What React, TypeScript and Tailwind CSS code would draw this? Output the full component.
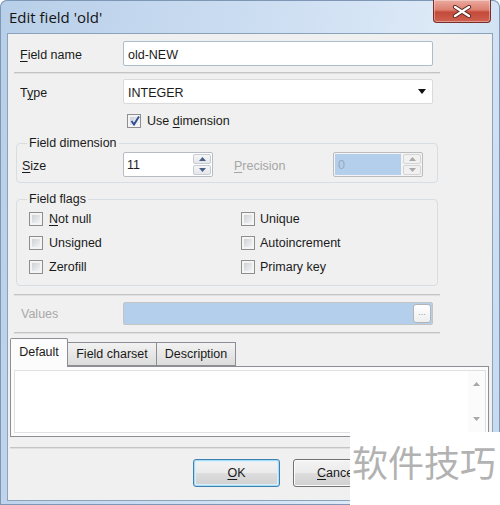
import React from 'react';

// small helpers for the classic win7 dialog widgets
const U = ({ children }: { children: React.ReactNode }) => (
  <span className="underline underline-offset-[2px] decoration-[1px]">{children}</span>
);

const Check = ({ checked = false }: { checked?: boolean }) => (
  <span className="relative inline-flex w-[14px] h-[14px] shrink-0 border border-[#8f8f8f] bg-[#f4f4f4] p-[2px]">
    <span className="block w-full h-full bg-[linear-gradient(135deg,#cdd1d6,#f3f3f3)]" />
    {checked && (
      <svg className="absolute left-[1px] top-[0px]" width="12" height="12" viewBox="0 0 12 12">
        <path d="M2.5 6 L5 9.5 L10 1.5" fill="none" stroke="#2d4f96" strokeWidth="1.9" />
      </svg>
    )}
  </span>
);

const Arrow = ({ up, color }: { up?: boolean; color: string }) => (
  <svg width="7" height="4" viewBox="0 0 7 4">
    <polygon points={up ? '0,4 3.5,0 7,4' : '0,0 7,0 3.5,4'} fill={color} />
  </svg>
);

const Spin = ({ value, disabled = false }: { value: string; disabled?: boolean }) => (
  <div
    className={`flex w-[90px] h-[25px] border rounded-[2px] ${
      disabled ? 'border-[#bcbcbc] bg-[#f4f4f4]' : 'border-[#b7bcc4] bg-white'
    }`}
  >
    <div
      className={`flex-1 flex items-center pl-[3px] pt-[2px] ${
        disabled ? 'bg-[#b3cfec] text-[#98aac0] m-[1px]' : 'text-[#1e1e1e]'
      }`}
    >
      {value}
    </div>
    <div className="w-[20px] flex flex-col gap-[1px] p-[1px]">
      {[true, false].map((up) => (
        <div
          key={String(up)}
          className={`flex-1 flex items-center justify-center rounded-[2px] border ${
            disabled
              ? 'border-[#d4d4d4] bg-[#f1f1f1]'
              : 'border-[#c6ccd4] bg-[linear-gradient(#f6f6f6,#e4e6ea)]'
          }`}
        >
          <Arrow up={up} color={disabled ? '#a9a9a9' : '#4a5f88'} />
        </div>
      ))}
    </div>
  </div>
);

const Sep = ({ wide = false }: { wide?: boolean }) => (
  <div
    className={`h-[2px] border-t border-[#c4c4c4] border-b border-b-[#e0e0e0] ${
      wide ? 'ml-[2px] w-[480px]' : 'ml-[6px] w-[426px]'
    }`}
  />
);

const flags: [React.ReactNode, string][] = [
  [<><U>N</U>ot null</>, 'Unique'],
  ['Unsigned', 'Autoincrement'],
  ['Zerofill', 'Primary key'],
];

export default function App() {
  return (
    <div className="relative w-[500px] h-[505px] overflow-hidden rounded-t-[7px] shadow-[inset_0_0_0_1px_#7d97b5] bg-[linear-gradient(100deg,#b8cfe9_0%,#cadcf1_40%,#dce9f7_75%,#c4d8ef_100%)] font-['Liberation_Sans',Arial,sans-serif] text-[12.5px] text-[#1a1a1a]">
      {/* Title bar */}
      <div className="flex justify-between h-[33px] pl-[9px] pr-[9px]">
        <div className="pt-[7px] font-['Open_Sans',sans-serif] text-[15px] leading-[20px] text-[#141414]">
          Edit field 'old'
        </div>
        <div className="w-[58px] h-[23px] rounded-b-[4px] border border-t-0 border-[#7a2e27] bg-[linear-gradient(#ebab9f_0%,#dc7f70_45%,#c44a3a_55%,#cf6150_100%)] shadow-[inset_0_0_0_1px_rgba(255,255,255,0.35)] flex items-center justify-center">
          <svg width="20" height="13" viewBox="0 0 20 13">
            <path d="M3 2 L17 11 M17 2 L3 11" stroke="#5b231d" strokeWidth="4.2" strokeLinecap="round" />
            <path d="M3 2 L17 11 M17 2 L3 11" stroke="#ffffff" strokeWidth="2.4" strokeLinecap="round" />
          </svg>
        </div>
      </div>

      {/* Dialog body */}
      <div className="ml-[7px] w-[486px] h-[468px] border border-[#8ba2bb] bg-[#f0f0f0] flex flex-col">
        <div className="mt-[7px] flex items-center h-[25px]">
          <div className="w-[115px] pl-[12px] pt-[3px]">
            <U>F</U>ield name
          </div>
          <div className="w-[310px] h-[25px] rounded-[2px] border border-[#aebccb] bg-white flex items-center pl-[4px] pt-[3px]">
            old-NEW
          </div>
        </div>

        <div className="mt-[6px]">
          <Sep />
        </div>

        <div className="mt-[5px] flex items-center h-[25px]">
          <div className="w-[115px] pl-[12px] pt-[3px]">
            T<U>y</U>pe
          </div>
          <div className="w-[310px] h-[25px] rounded-[2px] border border-[#dadada] bg-white flex items-center justify-between pl-[4px] pr-[6px]">
            <span className="pt-[3px]">INTEGER</span>
            <svg width="8" height="5" viewBox="0 0 8 5">
              <polygon points="0,0 8,0 4,5" fill="#111" />
            </svg>
          </div>
        </div>

        <div className="mt-[9px] h-[16px] pl-[119px] flex items-center gap-[6px]">
          <Check checked />
          <span className="pt-[1px]">
            Use <U>d</U>imension
          </span>
        </div>

        {/* Field dimension group */}
        <fieldset className="mt-[7px] ml-[8px] w-[422px] h-[47px] min-w-0 p-0 border border-[#d6dde3] rounded-[4px]">
          <legend className="ml-[10px] px-[2px] leading-[14px]">Field dimension</legend>
          <div className="mt-[2px] pl-[5px] flex items-center">
            <div className="w-[101px] pt-[3px]">
              <U>S</U>ize
            </div>
            <Spin value="11" />
            <div className="ml-[21px] w-[99px] pt-[3px] text-[#a6a6a6]">
              <U>P</U>recision
            </div>
            <Spin value="0" disabled />
          </div>
        </fieldset>

        {/* Field flags group */}
        <fieldset className="mt-[9px] ml-[8px] w-[422px] h-[94px] min-w-0 p-0 border border-[#d6dde3] rounded-[4px]">
          <legend className="ml-[10px] px-[2px] leading-[14px]">Field flags</legend>
          <div className="mt-[1px] pl-[12px] grid grid-cols-[212px_1fr]">
            {flags.map(([a, b], i) => (
              <React.Fragment key={i}>
                <div className="h-[24px] flex items-center gap-[6px]">
                  <Check />
                  <span className="pt-[1px]">{a}</span>
                </div>
                <div className="h-[24px] flex items-center gap-[5px]">
                  <Check />
                  <span className="pt-[1px]">{b}</span>
                </div>
              </React.Fragment>
            ))}
          </div>
        </fieldset>

        <div className="mt-[8px]">
          <Sep />
        </div>

        <div className="mt-[6px] flex items-center h-[23px]">
          <div className="w-[115px] pl-[13px] pt-[2px] text-[#a8a8a8]">Values</div>
          <div className="w-[310px] h-[23px] border border-[#c4c4c4] rounded-[2px] bg-[#b3cfec] flex items-center justify-end pr-[1px]">
            <div className="w-[18px] h-[19px] rounded-[3px] border border-[#b4b4b4] bg-[linear-gradient(#ffffff,#eeeeee)] flex items-center justify-center text-[9px] leading-none text-[#9a9a9a] pb-[3px]">
              ...
            </div>
          </div>
        </div>

        <div className="mt-[7px]">
          <Sep />
        </div>

        {/* Tabs */}
        <div className="mt-[4px] ml-[2px] flex items-start h-[28px]">
          <div className="relative z-10 w-[58px] h-[29px] border border-b-0 border-[#8c8e94] bg-[#fcfcfc] flex items-center justify-center pb-[2px] rounded-t-[2px]">
            Default
          </div>
          <div className="mt-[4px] -ml-[1px] w-[90px] h-[24px] border border-[#8c8e94] bg-[linear-gradient(#f2f2f2,#dcdcdc)] flex items-center justify-center pt-[1px]">
            Field charset
          </div>
          <div className="mt-[4px] -ml-[1px] w-[80px] h-[24px] border border-[#8c8e94] bg-[linear-gradient(#f2f2f2,#dcdcdc)] flex items-center justify-center pt-[1px]">
            Description
          </div>
        </div>
        <div className="ml-[2px] w-[479px] h-[71px] border border-[#8c8e94] bg-[#fcfcfc] pt-[3px] pb-[3px] pl-[3px] pr-[2px]">
          <div className="h-full flex border border-[#e0e0e0] bg-white">
            <div className="flex-1" />
            <div className="w-[17px] flex flex-col items-center justify-between py-[11px] bg-[#fbfbfb]">
              <Arrow up color="#a8a8a8" />
              <Arrow color="#a8a8a8" />
            </div>
          </div>
        </div>

        <div className="mt-[10px]">
          <Sep wide />
        </div>

        <div className="mt-[10px] flex pl-[185px] gap-[13px]">
          <div className="w-[87px] h-[28px] rounded-[3px] border border-[#3c7fb1] bg-[linear-gradient(#f3f3f3_0%,#ebebeb_50%,#dddddd_51%,#d0d0d0_100%)] shadow-[inset_0_0_0_1px_#a9dcf5,inset_0_0_0_2px_#d8f0fb] flex items-center justify-center pt-[1px]">
            <span>
              <U>O</U>K
            </span>
          </div>
          <div className="w-[87px] h-[28px] rounded-[3px] border border-[#707070] bg-[linear-gradient(#f3f3f3_0%,#ebebeb_50%,#dddddd_51%,#d0d0d0_100%)] shadow-[inset_0_0_0_1px_#fcfcfc] flex items-center justify-center pt-[1px]">
            <span>
              <U>C</U>ancel
            </span>
          </div>
        </div>
      </div>

      {/* watermark pasted over the corner */}
      <div className="absolute right-0 bottom-0 w-[150px] h-[73px] bg-white pl-[2px] pb-[16px] flex items-center font-['Noto_Sans_CJK_SC',sans-serif] text-[36px] leading-none text-[#b2b2b2]">
        软件技巧
      </div>
    </div>
  );
}
